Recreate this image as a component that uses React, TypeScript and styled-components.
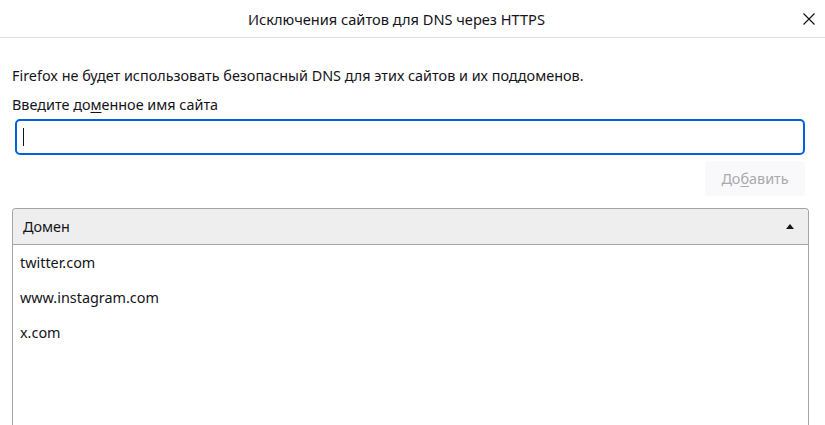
import styled, { createGlobalStyle } from "styled-components";

const GlobalStyle = createGlobalStyle`
  html, body {
    margin: 0;
    padding: 0;
    background: #ffffff;
    font-family: "Noto Sans", "Open Sans", sans-serif;
    color: #15141a;
  }
  #root {
    height: 425px;
    overflow: hidden;
  }
`;

const Dialog = styled.div`
  width: 825px;
  height: 425px;
  display: flex;
  flex-direction: column;
  overflow: hidden;
`;

const TitleBar = styled.div`
  flex-shrink: 0;
  height: 38px;
  display: grid;
  grid-template-columns: 793px 32px;
  align-items: center;
  border-bottom: 1px solid #e0e0e6;
  box-sizing: border-box;
`;

const Title = styled.h1`
  margin: 0;
  text-align: center;
  font-size: 14.6px;
  font-weight: 400;
  line-height: 20px;
`;

const CloseButton = styled.button`
  width: 32px;
  height: 32px;
  display: flex;
  align-items: center;
  justify-content: center;
  border: none;
  background: transparent;
  padding: 0;
  color: #15141a;
`;

const Content = styled.div`
  flex-shrink: 0;
  display: flex;
  flex-direction: column;
  padding: 28px 16px 0 12px;
`;

const Description = styled.p`
  margin: 0;
  font-size: 14.4px;
  line-height: 20px;
`;

const Label = styled.label`
  margin-top: 9px;
  font-size: 14.4px;
  line-height: 20px;
`;

const Underline = styled.span`
  text-decoration: underline;
  text-underline-offset: 2px;
`;

const InputWrap = styled.div`
  position: relative;
  display: flex;
  margin: 4px 4px 0 3px;

  /* the text caret of the focused field */
  &::after {
    content: "";
    position: absolute;
    left: 8px;
    top: 9px;
    width: 1px;
    height: 18px;
    background: #15141a;
    pointer-events: none;
  }
`;

const DomainInput = styled.input`
  flex: 1;
  height: 36px;
  box-sizing: border-box;
  border: 2px solid #0061e0;
  border-radius: 5px;
  padding: 0 6px;
  font-family: inherit;
  font-size: 14.4px;
  color: #15141a;
  outline: none;
  caret-color: transparent;
`;

const ButtonRow = styled.div`
  display: flex;
  justify-content: flex-end;
  margin: 6px 4px 0 0;
`;

const AddButton = styled.button<{ disabled?: boolean }>`
  width: 100px;
  height: 35px;
  border: none;
  border-radius: 4px;
  background: #f9f9fb;
  color: ${(p) => (p.disabled ? "#a9a9ae" : "#15141a")};
  font-family: inherit;
  font-size: 14.4px;
`;

const Table = styled.div`
  margin-top: 12px;
  border: 1px solid #a4a4a8;
  border-bottom: none;
  border-radius: 4px 4px 0 0;
  height: 240px;
  display: flex;
  flex-direction: column;
`;

const HeaderCell = styled.div`
  flex-shrink: 0;
  height: 35px;
  display: flex;
  align-items: center;
  justify-content: space-between;
  padding: 0 14px 0 10px;
  background: #eeeeee;
  border-bottom: 1px solid #a4a4a8;
  border-radius: 4px 4px 0 0;
  font-size: 14.4px;
`;

const SortArrow = styled.span`
  width: 0;
  height: 0;
  border-left: 4px solid transparent;
  border-right: 4px solid transparent;
  border-bottom: 5px solid #15141a;
`;

const Row = styled.div`
  flex-shrink: 0;
  height: 35px;
  display: flex;
  align-items: center;
  padding: 0 7px;
  font-size: 14.4px;
`;

const domains = ["twitter.com", "www.instagram.com", "x.com"];

export default function App() {
  return (
    <>
      <GlobalStyle />
      <Dialog>
        <TitleBar>
          <Title>Исключения сайтов для DNS через HTTPS</Title>
          <CloseButton type="button" aria-label="Закрыть">
            <svg width="12" height="12" viewBox="0 0 12 12">
              <path d="M0.5 0.5 L11.5 11.5 M11.5 0.5 L0.5 11.5" stroke="currentColor" strokeWidth="1.2" />
            </svg>
          </CloseButton>
        </TitleBar>
        <Content>
          <Description>
            Firefox не будет использовать безопасный DNS для этих сайтов и их поддоменов.
          </Description>
          <Label htmlFor="domain">
            Введите до<Underline>м</Underline>енное имя сайта
          </Label>
          <InputWrap>
            <DomainInput id="domain" autoFocus />
          </InputWrap>
          <ButtonRow>
            <AddButton type="button" disabled>
              До<Underline>б</Underline>авить
            </AddButton>
          </ButtonRow>
          <Table>
            <HeaderCell>
              <span>Домен</span>
              <SortArrow />
            </HeaderCell>
            {domains.map((d) => (
              <Row key={d}>{d}</Row>
            ))}
          </Table>
        </Content>
      </Dialog>
    </>
  );
}
